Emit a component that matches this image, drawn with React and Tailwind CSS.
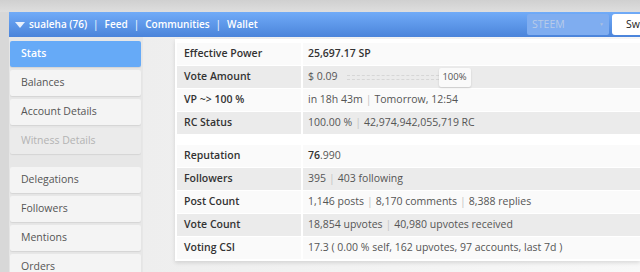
import React from "react";

const rows = [
  { label: "Effective Power", value: <span className="font-semibold text-[#333]">25,697.17 SP</span> },
  { label: "Vote Amount", vote: true },
  { label: "VP ~> 100 %", value: <>in 18h 43m <Sep /> Tomorrow, 12:54</> },
  { label: "RC Status", value: <>100.00 % <Sep /> 42,974,942,055,719 RC</> },
  { spacer: true },
  { label: "Reputation", value: <><span className="font-semibold text-[#333]">76</span>.990</> },
  { label: "Followers", value: <>395 <Sep /> 403 following</> },
  { label: "Post Count", value: <>1,146 posts <Sep /> 8,170 comments <Sep /> 8,388 replies</> },
  { label: "Vote Count", value: <>18,854 upvotes <Sep /> 40,980 upvotes received</> },
  { label: "Voting CSI", value: <>17.3 ( 0.00 % self, 162 upvotes, 97 accounts, last 7d )</> },
];

function Sep() {
  return <span className="text-[#c4c4c4] px-[3px]">|</span>;
}

const menu = [
  ["Stats", "active"],
  ["Balances"],
  ["Account Details"],
  ["Witness Details", "disabled"],
  [null],
  ["Delegations"],
  ["Followers"],
  ["Mentions"],
  ["Orders"],
];

export default function App() {
  let stripe = 0;
  return (
    <div className="w-[640px] h-[272px] overflow-hidden bg-[#d8d8d8] text-[10.5px] text-[#555]" style={{ fontFamily: '"Open Sans", "Noto Sans", sans-serif' }}>
      <div className="h-[12px] bg-gradient-to-b from-[#d0d0d0] to-[#dedede]" />
      <div className="ml-[9px] flex flex-col">
        <div className="h-[25px] flex items-center bg-gradient-to-b from-[#70abf8] to-[#4b84da] text-white font-semibold text-[10px]">
          <svg width="10" height="6" viewBox="0 0 10 6" className="ml-[6px] mr-[4px]">
            <path d="M0 0h10L5 6z" fill="#e8f0fc" />
          </svg>
          <span>sualeha (76)</span>
          <span className="px-[6px] font-normal">|</span>
          <span>Feed</span>
          <span className="px-[6px] font-normal">|</span>
          <span>Communities</span>
          <span className="px-[6px] font-normal">|</span>
          <span>Wallet</span>
          <div className="ml-auto flex items-center gap-[3px] self-stretch py-[2px]">
            <div className="w-[82px] h-full rounded-[2px] bg-[#7fadf0] flex items-center justify-between px-[5px] font-normal text-[10.5px] text-[#b8cbe8]">
              <span>STEEM</span>
              <span className="text-[5px] text-[#a9bfe2]">▼</span>
            </div>
            <div className="w-[28px] h-full rounded-l-[3px] bg-white text-[#222] font-normal text-[10.5px] flex items-center pl-[14px] whitespace-nowrap">Sw</div>
          </div>
        </div>
        <div className="flex h-[235px]">
          <div className="w-[134px] bg-[#e7e7e7] pt-[4px] pl-[1px] flex flex-col gap-[3px]">
            {menu.map(([name, kind], i) =>
              name === null ? (
                <div key={i} className="h-[7px] shrink-0" />
              ) : (
                <div
                  key={i}
                  className={
                    "w-[131px] h-[26px] shrink-0 rounded-[2px] flex items-center pl-[11px] shadow-[0_1px_1px_rgba(0,0,0,0.08)] " +
                    (kind === "active"
                      ? "bg-[#66aaf7] text-white font-semibold"
                      : kind === "disabled"
                      ? "bg-[#ebebeb] text-[#b3b3b3]"
                      : "bg-[#f4f4f4] text-[#555]")
                  }
                >
                  {name}
                </div>
              )
            )}
          </div>
          <div className="flex-1 bg-gradient-to-r from-[#eeeeee] to-[#f8f8f8] pl-[32px] pt-[2px]">
            <div className="bg-white shadow-[0_2px_4px_rgba(0,0,0,0.12)] pt-[4px] pb-[2px] pl-[2px] flex flex-col gap-[1px]">
              {rows.map((r, i) => {
                if (r.spacer) return <div key={i} className="h-[9px]" />;
                const bg = stripe++ % 2 === 0 ? "bg-[#fafafa]" : "bg-[#ebebeb]";
                return (
                  <div key={i} className="flex gap-[2px] h-[22px]">
                    <div className={`w-[124px] ${bg} flex items-center pl-[7px] font-semibold text-[#333]`}>{r.label}</div>
                    <div className={`flex-1 ${bg} flex items-center pl-[5px] whitespace-nowrap`}>
                      {r.vote ? (
                        <>
                          <span>$ 0.09</span>
                          <div className="ml-[9px] w-[92px] h-[5px] border-y border-dashed border-[#d6d6d6]" />
                          <div className="h-[19px] w-[32px] bg-[#fafafa] rounded-[2px] shadow-[0_1px_2px_rgba(0,0,0,0.15)] flex items-center justify-center text-[9.5px]">100%</div>
                        </>
                      ) : (
                        r.value
                      )}
                    </div>
                  </div>
                );
              })}
            </div>
          </div>
        </div>
      </div>
    </div>
  );
}
